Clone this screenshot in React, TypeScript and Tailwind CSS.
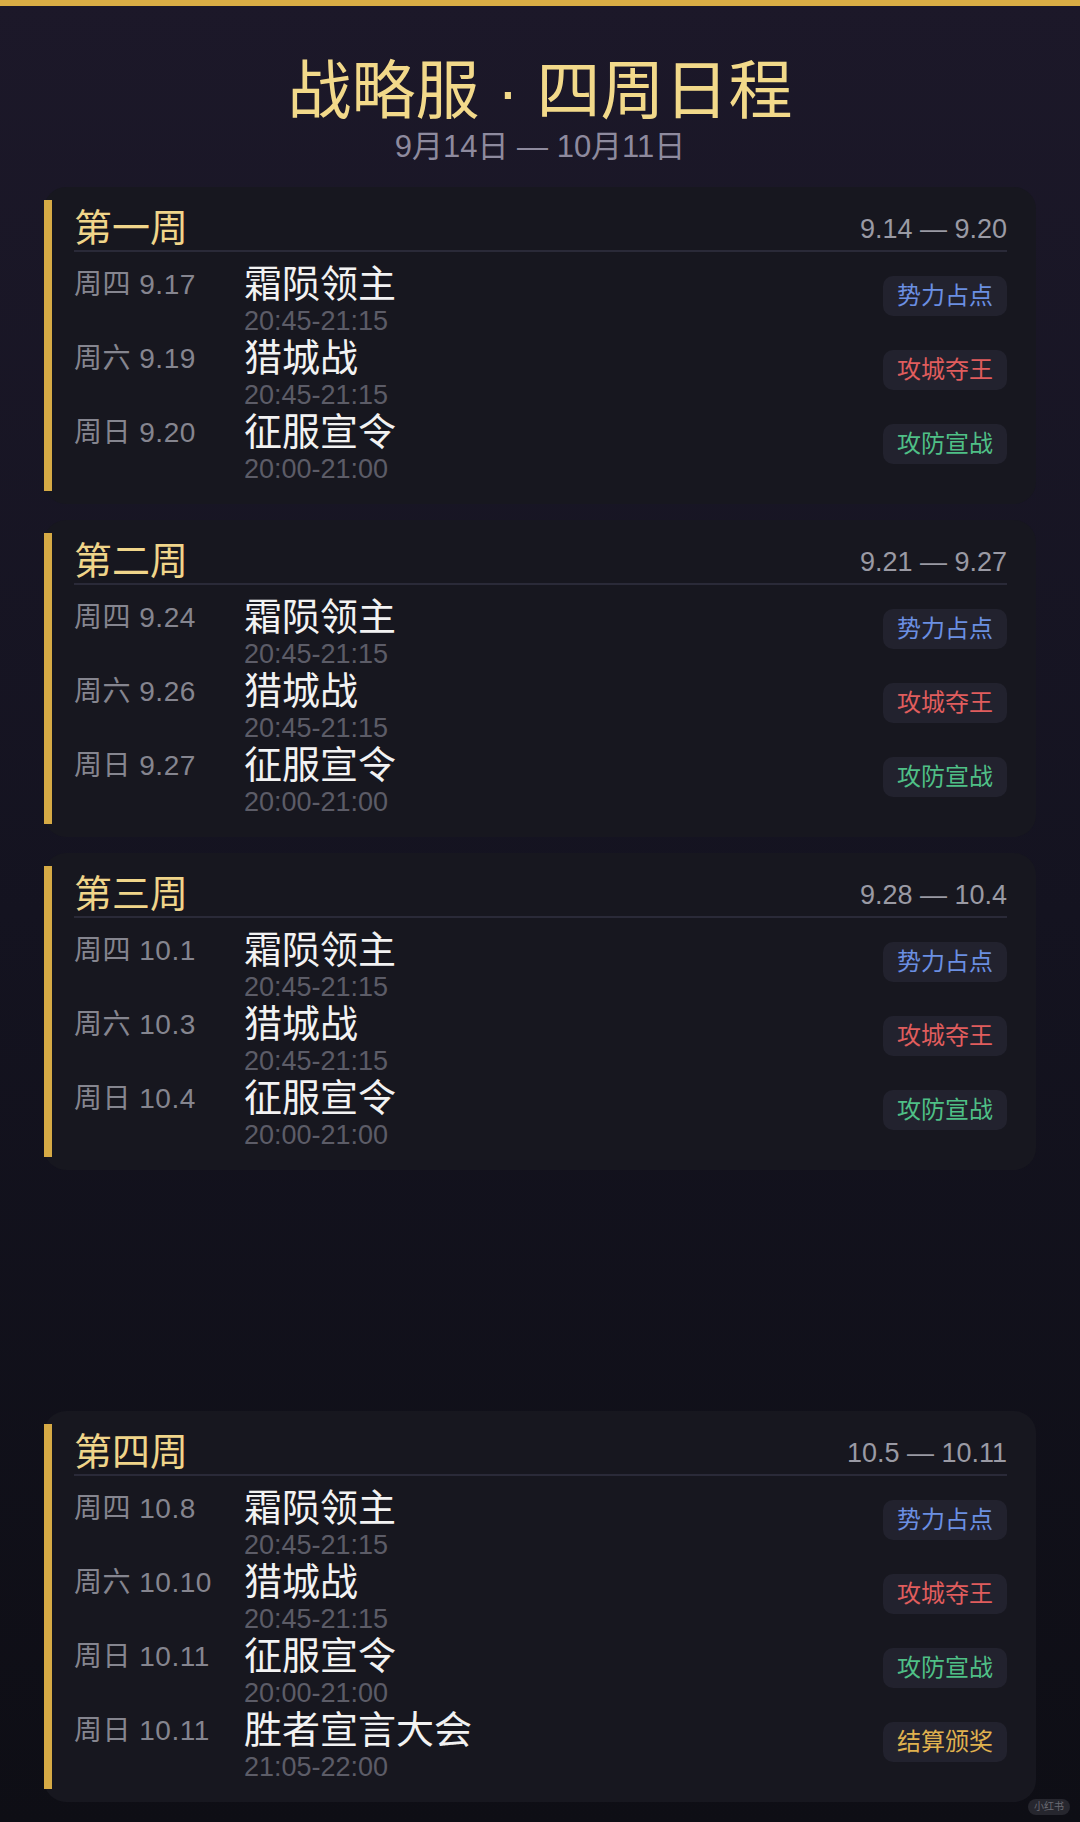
import React from 'react';

type Tag = 'blue' | 'red' | 'green' | 'gold';

interface Event {
    day: string;
    name: string;
    time: string;
    tag: string;
    tone: Tag;
}

interface Week {
    title: string;
    range: string;
    events: Event[];
}

const toneClass: Record<Tag, string> = {
    blue: 'text-[#6b8fe2]',
    red: 'text-[#e05d5d]',
    green: 'text-[#4fbf86]',
    gold: 'text-[#e0b24f]',
};

const weeks: Week[] = [
    {
        title: '第一周',
        range: '9.14 — 9.20',
        events: [
            { day: '周四 9.17', name: '霜陨领主', time: '20:45-21:15', tag: '势力占点', tone: 'blue' },
            { day: '周六 9.19', name: '猎城战', time: '20:45-21:15', tag: '攻城夺王', tone: 'red' },
            { day: '周日 9.20', name: '征服宣令', time: '20:00-21:00', tag: '攻防宣战', tone: 'green' },
        ],
    },
    {
        title: '第二周',
        range: '9.21 — 9.27',
        events: [
            { day: '周四 9.24', name: '霜陨领主', time: '20:45-21:15', tag: '势力占点', tone: 'blue' },
            { day: '周六 9.26', name: '猎城战', time: '20:45-21:15', tag: '攻城夺王', tone: 'red' },
            { day: '周日 9.27', name: '征服宣令', time: '20:00-21:00', tag: '攻防宣战', tone: 'green' },
        ],
    },
    {
        title: '第三周',
        range: '9.28 — 10.4',
        events: [
            { day: '周四 10.1', name: '霜陨领主', time: '20:45-21:15', tag: '势力占点', tone: 'blue' },
            { day: '周六 10.3', name: '猎城战', time: '20:45-21:15', tag: '攻城夺王', tone: 'red' },
            { day: '周日 10.4', name: '征服宣令', time: '20:00-21:00', tag: '攻防宣战', tone: 'green' },
        ],
    },
    {
        title: '第四周',
        range: '10.5 — 10.11',
        events: [
            { day: '周四 10.8', name: '霜陨领主', time: '20:45-21:15', tag: '势力占点', tone: 'blue' },
            { day: '周六 10.10', name: '猎城战', time: '20:45-21:15', tag: '攻城夺王', tone: 'red' },
            { day: '周日 10.11', name: '征服宣令', time: '20:00-21:00', tag: '攻防宣战', tone: 'green' },
            { day: '周日 10.11', name: '胜者宣言大会', time: '21:05-22:00', tag: '结算颁奖', tone: 'gold' },
        ],
    },
];

function WeekCard({ week, className }: { week: Week; className?: string }) {
    return (
        <div className={`mx-[44px] rounded-[22px] bg-[#17171f] py-[13px] pr-[29px] ${className ?? ''}`}>
            <div className="border-l-8 border-[#d6aa45] pl-[22px] pt-[6px] pb-[7px]">
                <div className="flex h-[46px] items-start justify-between border-b-2 border-[#2a2a38]">
                    <span className="text-[38px] leading-[44px] text-[#f0d58a]">{week.title}</span>
                    <span className="mt-[10px] text-[27px] leading-none text-[#9a9aa4]">{week.range}</span>
                </div>
                <div className="mt-[10px]">
                    {week.events.map((ev, i) => (
                        <div key={i} className="flex h-[74px] items-start justify-between">
                            <div className="flex items-start">
                                <span className="w-[170px] shrink-0 text-[28px] leading-[46px] tracking-[0.5px] text-[#85858f]">
                                    {ev.day}
                                </span>
                                <div className="flex flex-col">
                                    <span className="text-[38px] leading-[44px] text-[#f2f2f2]">{ev.name}</span>
                                    <span className="text-[27px] leading-[30px] text-[#5c5c67]">{ev.time}</span>
                                </div>
                            </div>
                            <span
                                className={`mt-[14px] h-10 rounded-[10px] bg-[#22222e] px-[14px] text-[24px] leading-10 ${toneClass[ev.tone]}`}
                            >
                                {ev.tag}
                            </span>
                        </div>
                    ))}
                </div>
            </div>
        </div>
    );
}

export default function App() {
    return (
        <div className="relative min-h-[1822px] bg-linear-to-b from-[#1c1829] via-[#141320] to-[#0e0e15] font-['Liberation_Sans','Noto_Sans_CJK_SC',sans-serif]">
            <div className="h-[6px] bg-[#d9ad45]" />
            <h1 className="mt-[49px] text-center text-[64px] leading-[72px] font-normal text-[#f2d98a]">
                战略服 · 四周日程
            </h1>
            <p className="mt-[2px] text-center text-[31px] leading-[36px] text-[#8e8a9e]">
                9月14日 — 10月11日
            </p>

            <div className="mt-[22px] flex flex-col gap-4">
                <WeekCard week={weeks[0]} />
                <WeekCard week={weeks[1]} />
                <WeekCard week={weeks[2]} />
            </div>
            <WeekCard week={weeks[3]} className="mt-[241px]" />

            <span className="absolute right-[10px] bottom-[7px] rounded-full bg-[#26262e] px-[6px] text-[10px] leading-[16px] text-[#6a6a72]">
                小红书
            </span>
        </div>
    );
}
